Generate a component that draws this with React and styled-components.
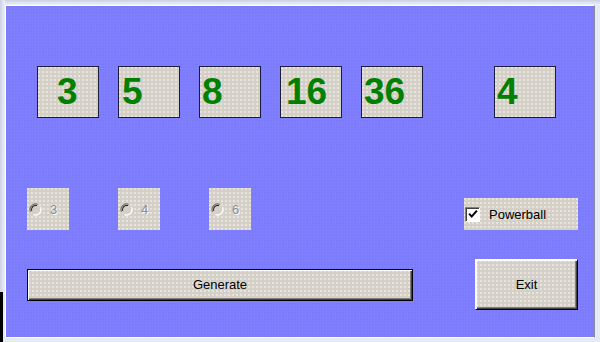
import React from "react";
import styled, { createGlobalStyle } from "styled-components";

const Global = createGlobalStyle`
  html, body { margin: 0; padding: 0; background: #dfe4ee; }
  body { font-family: "Liberation Sans", Arial, sans-serif; }
`;

const dots = `
  background-color: #d4d0c8;
  background-image: radial-gradient(circle at 1px 1px, rgba(240,238,232,0.9) 0.6px, transparent 1px);
  background-size: 4px 4px;
`;

const Window = styled.div`
  width: 600px;
  height: 342px;
  box-sizing: border-box;
  padding: 5px 5px 4px 5px;
  background:
    linear-gradient(#000, #000) 0 292px / 3px 50px no-repeat,
    linear-gradient(90deg, #c9d1e3, #eef1f7) 0 0 / 5px 100% no-repeat,
    linear-gradient(#c9d1e3, #eef1f7) 0 0 / 100% 5px no-repeat,
    #e6eaf2;
  overflow: hidden;
`;

const Panel = styled.div`
  box-sizing: border-box;
  width: 590px;
  height: 333px;
  border: 1px solid;
  border-color: #ffffff #8a8a9a #ffffff #ffffff;
  background-color: #8080ff;
  background-image: radial-gradient(circle at 1px 1px, rgba(112,112,245,0.45) 0.6px, transparent 1px);
  background-size: 3px 3px;
  display: flex;
  flex-direction: column;
`;

const NumbersRow = styled.div`
  display: flex;
  gap: 19px;
  margin-top: 60px;
  padding-left: 31px;
  height: 52px;
`;

const NumberBox = styled.div`
  ${dots}
  box-sizing: border-box;
  width: 62px;
  height: 52px;
  border: 1px solid #1c1c3c;
  color: #008000;
  font-family: "Liberation Sans", Arial, sans-serif;
  font-weight: bold;
  font-size: 37px;
  line-height: 50px;
  padding-left: ${(p) => p.$indent}px;
  margin-left: ${(p) => p.$gapBefore || 0}px;
`;

const ControlsRow = styled.div`
  display: flex;
  align-items: flex-end;
  margin-top: 70px;
  padding: 0 16px 0 21px;
  height: 42px;
`;

const RadioGroup = styled.div`
  display: flex;
  gap: 49px;
`;

const RadioBox = styled.label`
  ${dots}
  width: 42px;
  height: 42px;
  display: flex;
  align-items: center;
  padding-left: 2px;
  box-sizing: border-box;
  gap: 8px;
  font-size: 13px;
  color: #8c8c8c;
  text-shadow: 1px 1px 0 #ffffff;
`;

const CheckBox = styled.label`
  ${dots}
  margin-left: auto;
  width: 114px;
  height: 32px;
  display: flex;
  align-items: center;
  gap: 9px;
  padding-left: 1px;
  box-sizing: border-box;
  font-size: 13px;
  color: #000;
`;

const CheckSquare = styled.span`
  width: 15px;
  height: 15px;
  box-sizing: border-box;
  background: #fff;
  border: 1px solid;
  border-color: #808080 #ffffff #ffffff #808080;
  box-shadow: inset 1px 1px 0 #404040;
  display: flex;
  align-items: center;
  justify-content: center;
`;

const ButtonsRow = styled.div`
  display: flex;
  align-items: center;
  margin-top: 29px;
  padding: 0 16px 0 21px;
  height: 51px;
`;

const Button = styled.button`
  ${dots}
  box-sizing: border-box;
  width: ${(p) => p.$w}px;
  height: ${(p) => p.$h}px;
  margin-left: ${(p) => (p.$right ? "auto" : "0")};
  font-family: "Liberation Sans", Arial, sans-serif;
  font-size: 13px;
  color: #000;
  padding: 0;
  border: 1px solid;
  border-color: ${(p) => (p.$default ? "#000" : "#ffffff #000000 #000000 #ffffff")};
  box-shadow: inset 1px 1px 0 #ffffff, inset -1px -1px 0 #404040, inset -2px -2px 0 #808080;
`;

const Radio = () => (
  <svg width="13" height="13" viewBox="0 0 12 12">
    <circle cx="6" cy="6" r="5" fill="#d4d0c8" />
    <path d="M1.4 8 A5 5 0 0 1 8 1.4" fill="none" stroke="#707070" strokeWidth="1.1" />
    <path d="M2.4 7.3 A4 4 0 0 1 7.3 2.4" fill="none" stroke="#202020" strokeWidth="1" />
    <path d="M10.6 4 A5 5 0 0 1 4 10.6" fill="none" stroke="#ffffff" strokeWidth="1.2" />
  </svg>
);

const Check = () => (
  <svg width="10" height="10" viewBox="0 0 9 9">
    <path d="M1 4.2 L3.3 6.8 L8 1.5" fill="none" stroke="#000" strokeWidth="1.8" />
  </svg>
);

const numbers = [
  { v: "3", indent: 19 },
  { v: "5", indent: 3 },
  { v: "8", indent: 2 },
  { v: "16", indent: 5 },
  { v: "36", indent: 2 },
  { v: "4", indent: 2, gap: 52 },
];

export default function App() {
  return (
    <>
      <Global />
      <Window>
        <Panel>
          <NumbersRow>
            {numbers.map((n, i) => (
              <NumberBox key={i} $indent={n.indent} $gapBefore={n.gap}>
                {n.v}
              </NumberBox>
            ))}
          </NumbersRow>
          <ControlsRow>
            <RadioGroup>
              {["3", "4", "6"].map((r) => (
                <RadioBox key={r}>
                  <Radio />
                  {r}
                </RadioBox>
              ))}
            </RadioGroup>
            <CheckBox>
              <CheckSquare>
                <Check />
              </CheckSquare>
              Powerball
            </CheckBox>
          </ControlsRow>
          <ButtonsRow>
            <Button $w={386} $h={32} $default>
              Generate
            </Button>
            <Button $w={103} $h={51} $right>
              Exit
            </Button>
          </ButtonsRow>
        </Panel>
      </Window>
    </>
  );
}
